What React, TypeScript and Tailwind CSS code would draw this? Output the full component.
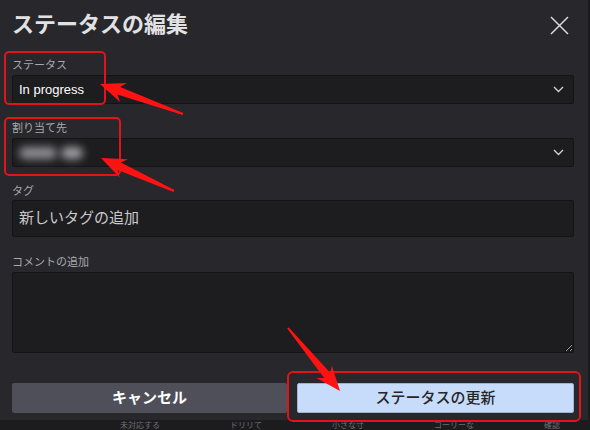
import React from 'react';

const font = { fontFamily: '"Liberation Sans", "Noto Sans CJK JP", sans-serif' };

type Pt = [number, number];

function arrowPoints(tail: Pt, tip: Pt) {
  const dx = tip[0] - tail[0];
  const dy = tip[1] - tail[1];
  const len = Math.hypot(dx, dy);
  const ux = dx / len;
  const uy = dy / len;
  const nx = -uy;
  const ny = ux;
  const headLen = 20;
  const headW = 10;
  const neckW = 4;
  const tailW = 1;
  const neck: Pt = [tip[0] - ux * headLen, tip[1] - uy * headLen];
  const barb: Pt = [tip[0] - ux * (headLen + 5), tip[1] - uy * (headLen + 5)];
  const pts: Pt[] = [
    [tail[0] + nx * tailW, tail[1] + ny * tailW],
    [neck[0] + nx * neckW, neck[1] + ny * neckW],
    [barb[0] + nx * headW, barb[1] + ny * headW],
    tip,
    [barb[0] - nx * headW, barb[1] - ny * headW],
    [neck[0] - nx * neckW, neck[1] - ny * neckW],
    [tail[0] - nx * tailW, tail[1] - ny * tailW],
  ];
  return pts.map((p) => `${p[0].toFixed(1)},${p[1].toFixed(1)}`).join(' ');
}

function Label({ children }: { children: React.ReactNode }) {
  return <div className="h-[14px] text-[11px] leading-[14px] text-[#a9a9ad]">{children}</div>;
}

function Chevron() {
  return (
    <svg width="11" height="7" viewBox="0 0 11 7" className="mr-[9px]">
      <path d="M1 1l4.5 4.5L10 1" fill="none" stroke="#cfcfd2" strokeWidth="1.4" />
    </svg>
  );
}

function SelectBox({ children }: { children: React.ReactNode }) {
  return (
    <div className="mt-[3px] flex h-[29px] items-center justify-between rounded-[2px] border border-[#141416] bg-[#1d1d20] pl-[6px]">
      <div className="flex items-center">{children}</div>
      <Chevron />
    </div>
  );
}

export default function App() {
  return (
    <div className="relative h-[430px] w-[590px] overflow-hidden bg-[#1c1c1f]" style={font}>
      <div className="flex">
        <div className="h-[420px] w-[588px] bg-[#27272c] pl-3 pr-[14px] pt-[9px]">
          <div className="flex h-[32px] items-center justify-between">
            <h1 className="text-[22px] font-bold leading-[32px] text-[#e2e2e4]">ステータスの編集</h1>
            <svg width="19" height="19" viewBox="0 0 19 19" className="mr-[5px]">
              <path d="M1 1l17 17M18 1L1 18" stroke="#dcdcde" strokeWidth="1.5" />
            </svg>
          </div>

          <div className="mt-[17px]">
            <Label>ステータス</Label>
            <SelectBox>
              <span className="text-[13px] text-white">In progress</span>
            </SelectBox>
          </div>

          <div className="mt-[17px]">
            <Label>割り当て先</Label>
            <SelectBox>
              <div className="flex items-center gap-[4px]">
                <div className="h-[12px] w-[38px] rounded-full bg-[#8f8f94] blur-[4px]" />
                <div className="h-[12px] w-[22px] rounded-full bg-[#a2a2a6] blur-[4px]" />
              </div>
            </SelectBox>
          </div>

          <div className="mt-[17px]">
            <Label>タグ</Label>
            <div className="mt-[2px] flex h-[37px] items-center rounded-[2px] border border-[#141416] bg-[#1d1d20] pl-[6px]">
              <span className="text-[15px] text-[#c9c9cc]">新しいタグの追加</span>
            </div>
          </div>

          <div className="mt-[18px]">
            <Label>コメントの追加</Label>
            <textarea
              className="mt-[3px] block h-[81px] w-full rounded-[2px] border border-[#141416] bg-[#1d1d20] [color-scheme:dark]"
              defaultValue=""
            />
          </div>

          <div className="mt-[30px] flex gap-[10px]">
            <button
              type="button"
              className="h-[30px] flex-1 rounded-[2px] bg-[#4f4f5a] text-[15px] font-bold text-white"
            >
              キャンセル
            </button>
            <button
              type="button"
              className="h-[30px] flex-1 rounded-[2px] border border-[#9fb3cf] bg-[#c6dcfa] text-[15px] font-medium text-[#26262a]"
            >
              ステータスの更新
            </button>
          </div>
        </div>
        <div className="h-[420px] w-[2px] bg-[#1c1c1f]" />
      </div>
      <div className="flex h-[10px] items-center gap-[70px] pl-[120px] text-[8px] leading-[9px] text-[#6f6f74]">
        <span>未対応する</span>
        <span>ドリリて</span>
        <span>小さな寸</span>
        <span>コーリーな</span>
        <span>確認</span>
      </div>

      <svg className="pointer-events-none absolute inset-0" width="590" height="430">
        <rect x="5" y="52" width="100" height="52" rx="4" fill="none" stroke="#e0141a" strokeWidth="2" />
        <rect x="5" y="118" width="115" height="57" rx="4" fill="none" stroke="#e0141a" strokeWidth="2" />
        <rect x="288" y="372" width="292" height="49" rx="5" fill="none" stroke="#e0141a" strokeWidth="2" />
        <polygon points={arrowPoints([183, 114], [100, 84])} fill="#ff1212" />
        <polygon points={arrowPoints([174, 191], [101, 158])} fill="#ff1212" />
        <polygon points={arrowPoints([288, 328], [340, 391])} fill="#ff1212" />
      </svg>
    </div>
  );
}
